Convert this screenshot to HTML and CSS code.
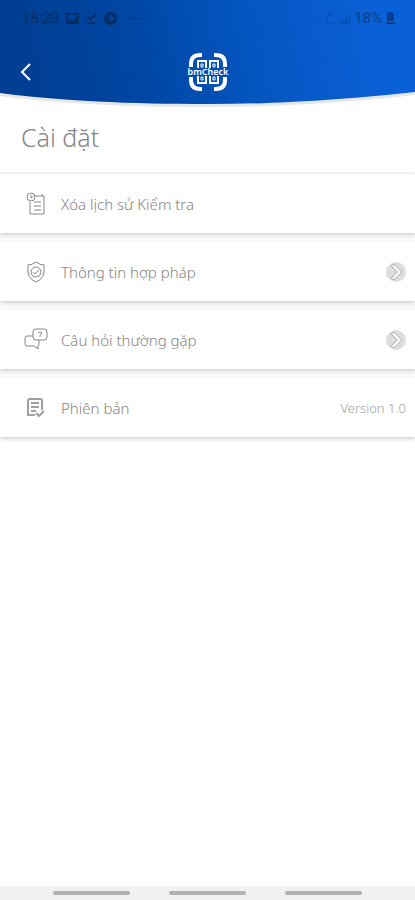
FILE: index.html
```html
<!DOCTYPE html>
<html lang="vi">
<head>
<meta charset="utf-8">
<meta name="viewport" content="width=device-width, initial-scale=1">
<title>Cài đặt</title>
<link rel="stylesheet" href="styles.css">
</head>
<body>
<div class="app">
  <header class="header">
    <svg class="header-bg" viewBox="0 0 415 108" preserveAspectRatio="none" aria-hidden="true">
      <defs>
        <linearGradient id="blue" gradientUnits="userSpaceOnUse" x1="40" y1="90" x2="370" y2="20">
          <stop offset="0" stop-color="#003f94"/>
          <stop offset="0.3" stop-color="#0046a3"/>
          <stop offset="0.6" stop-color="#0454be"/>
          <stop offset="1" stop-color="#0a60d6"/>
        </linearGradient>
      </defs>
      <path class="curve-shade" d="M0 0H415V95C330 104 270 107 208 107C130 107 60 104 0 96Z"/>
      <path fill="url(#blue)" d="M0 0H415V92C330 101 270 104 208 104C130 104 60 101 0 93Z"/>
    </svg>
    <div class="status">
      <div class="status-group">
        <span class="clock">18:29</span>
        <svg class="status-icon" viewBox="0 0 14 14"><path fill-rule="evenodd" d="M0 1H14V13H0ZM2 3V10L5 7L8 9L12 5V3Z"/></svg>
        <svg class="status-icon" viewBox="0 0 14 14"><path class="line" d="M3 5L6 8L12 2M2 12H12"/></svg>
        <svg class="status-icon" viewBox="0 0 14 14"><circle cx="7" cy="7" r="7"/><path fill="#0046a3" d="M7 2L8 5L12 5L10 9L5 10L7 7L4 5Z"/></svg>
        <svg class="status-icon more" viewBox="0 0 14 14"><circle cx="1" cy="7" r="1"/><circle cx="7" cy="7" r="1"/><circle cx="13" cy="7" r="1"/></svg>
      </div>
      <div class="status-group right">
        <svg class="status-icon faint" viewBox="0 0 14 14"><path d="M5 2L8 0V4ZM2 5H4V8H2ZM3 11H6V13H3ZM9 11H11V13H9Z"/></svg>
        <svg class="status-icon faint" viewBox="0 0 14 14"><path d="M1 11H3V13H1ZM4 9H6V13H4ZM7 6H9V13H7ZM11 3H12V13H11Z"/></svg>
        <span class="battery-text">18%</span>
        <svg class="battery" viewBox="0 0 9 14"><path d="M3 1H6V2H8V10H1V2H3ZM0 11H9V13H0Z"/></svg>
      </div>
    </div>
    <div class="bar">
      <button class="back" type="button" aria-label="Quay lại"><svg viewBox="0 0 12 20"><path d="M10 2L2 10L10 18"/></svg></button>
      <div class="logo">
        <svg viewBox="0 0 40 40" aria-hidden="true">
          <path class="corner" d="M3 15V12Q3 3 12 3H14M26 3H28Q37 3 37 12V15M3 25V28Q3 37 12 37H14M26 37H28Q37 37 37 28V25"/>
          <path class="code" d="M10 16V9H18V16M22 16V9H30V16M10 24V31H18V24M22 24V31H30V24"/>
          <path class="dots" d="M13 12H15V15H13ZM25 12H27V15H25ZM13 25H15V28H13ZM25 25H27V28H25Z"/>
        </svg>
        <span class="logo-text">bmCheck</span>
      </div>
    </div>
  </header>
  <main class="main">
    <h1 class="title">Cài đặt</h1>
    <div class="list">
      <button class="row" type="button">
        <svg class="icon" viewBox="0 0 24 24"><path d="M11 4H20V22H6V10M10 10H17M10 14H17M10 18H17"/><path d="M18 4V2"/><circle cx="7" cy="5" r="4"/><path d="M7 3V6L9 5"/></svg>
        <span class="label">Xóa lịch sử Kiểm tra</span>
      </button>
      <button class="row" type="button">
        <svg class="icon" viewBox="0 0 24 24"><path d="M12 2Q16 5 20 5V12Q20 18 12 22Q4 18 4 12V5Q8 5 12 2Z"/><circle cx="12" cy="12" r="5"/><path d="M9 12L11 14L15 10"/></svg>
        <span class="label">Thông tin hợp pháp</span>
        <svg class="go" viewBox="0 0 20 20"><circle cx="10" cy="10" r="10"/><path class="go-fill" d="M7 3L14 10L7 17"/><path d="M8 2L16 10L8 18M5 4L11 10L5 16M5 4L8 2M5 16L8 18"/></svg>
      </button>
      <button class="row" type="button">
        <svg class="icon" viewBox="0 0 24 24"><path d="M12 1H20Q23 1 23 4V9Q23 12 20 12H12Q9 12 9 9V4Q9 1 12 1Z"/><path d="M9 8H3Q1 8 1 10V16Q1 18 3 18H10L14 21V18Q15 17 15 15V12"/><path d="M14 5Q16 3 18 5L16 7V9"/></svg>
        <span class="label">Câu hỏi thường gặp</span>
        <svg class="go" viewBox="0 0 20 20"><circle cx="10" cy="10" r="10"/><path class="go-fill" d="M7 3L14 10L7 17"/><path d="M8 2L16 10L8 18M5 4L11 10L5 16M5 4L8 2M5 16L8 18"/></svg>
      </button>
      <div class="row">
        <svg class="icon bold" viewBox="0 0 24 24"><path d="M18 14V5Q18 3 16 3H6Q4 3 4 5V17Q4 19 3 19H11M7 7H15M7 11H15M7 15H12M12 17L15 20L20 15"/></svg>
        <span class="label">Phiên bản</span>
        <span class="version">Version 1.0</span>
      </div>
    </div>
  </main>
  <footer class="nav"><span></span><span></span><span></span></footer>
</div>
</body>
</html>
```
FILE: styles.css
```css
* { box-sizing: border-box; }
body {
  margin: 0;
  background: #fff;
  font-family: "Noto Sans", "Open Sans", sans-serif;
  font-weight: 300;
  color: #858585;
}
.app { min-height: 100vh; display: flex; flex-direction: column; }
.header { position: relative; height: 108px; }
.header-bg { position: absolute; inset: 0; width: 100%; height: 100%; }
.curve-shade { fill: #e6e6e6; }
.status {
  position: relative;
  display: flex;
  justify-content: space-between;
  align-items: center;
  height: 36px;
  padding: 0 20px 0 22px;
  font-family: Roboto, sans-serif;
  font-size: 15px;
  font-weight: 400;
  color: #062d66;
}
.status-group { display: flex; align-items: center; gap: 6px; }
.status-group.right { gap: 2px; color: #08408f; }
.status-icon { width: 13px; height: 13px; fill: currentColor; }
.status-icon .line { fill: none; stroke: currentColor; stroke-width: 2; }
.more { margin-left: 6px; }
.clock { margin-right: 1px; }
.faint { opacity: 0.6; }
.battery { width: 9px; height: 14px; fill: currentColor; margin-left: 2px; }
.bar {
  position: relative;
  display: grid;
  grid-template-columns: 1fr 40px 1fr;
  align-items: center;
  height: 71px;
}
.back {
  width: 24px;
  margin-left: 14px;
  padding: 0;
  border: 0;
  background: none;
  display: flex;
  justify-content: center;
}
.back svg {
  width: 12px;
  height: 20px;
  fill: none;
  stroke: #fff;
  stroke-width: 2;
}
.logo { position: relative; height: 40px; display: grid; place-items: center; }
.logo svg { position: absolute; inset: 0; fill: none; stroke: #fff; }
.corner { stroke-width: 4; }
.code { stroke-width: 2; }
.logo .dots { stroke-width: 1; }
.logo-text {
  position: relative;
  font: 600 9px/8px "Noto Sans", sans-serif;
  color: #fff;
  background: #034fb5;
}
.main { flex: 1; }
.title {
  margin: 0;
  height: 66px;
  padding: 9px 21px;
  font-size: 25px;
  line-height: 40px;
  font-weight: 300;
  border-bottom: 2px solid #f5f5f5;
}
.list { display: grid; gap: 9px; background: #fbfbfb; }
.row {
  display: flex;
  align-items: center;
  gap: 13px;
  width: 100%;
  height: 59px;
  padding: 0 9px 0 24px;
  border: 0;
  background: #fff;
  box-shadow: 0 2px 4px #d2d2d2;
  font: inherit;
  font-size: 15px;
  color: inherit;
  text-align: left;
}
.label { flex: 1; }
.icon { width: 24px; height: 24px; fill: none; stroke: #858585; stroke-width: 1; }
.icon.bold { stroke: #a0a0a0; stroke-width: 2; }
.go { width: 20px; height: 20px; fill: none; stroke: #b0b0b0; }
.go circle { fill: #dedede; stroke: none; }
.go .go-fill { fill: none; stroke: #f4f4f4; stroke-width: 3; }
.version { font-size: 13px; color: #a0a0a0; }
.nav {
  display: flex;
  justify-content: center;
  gap: 9.5%;
  height: 14px;
  padding-top: 5px;
  background: #f1f1f1;
}
.nav span { width: 18.5%; height: 4px; border-radius: 2px; background: #b2b2b2; }
```
